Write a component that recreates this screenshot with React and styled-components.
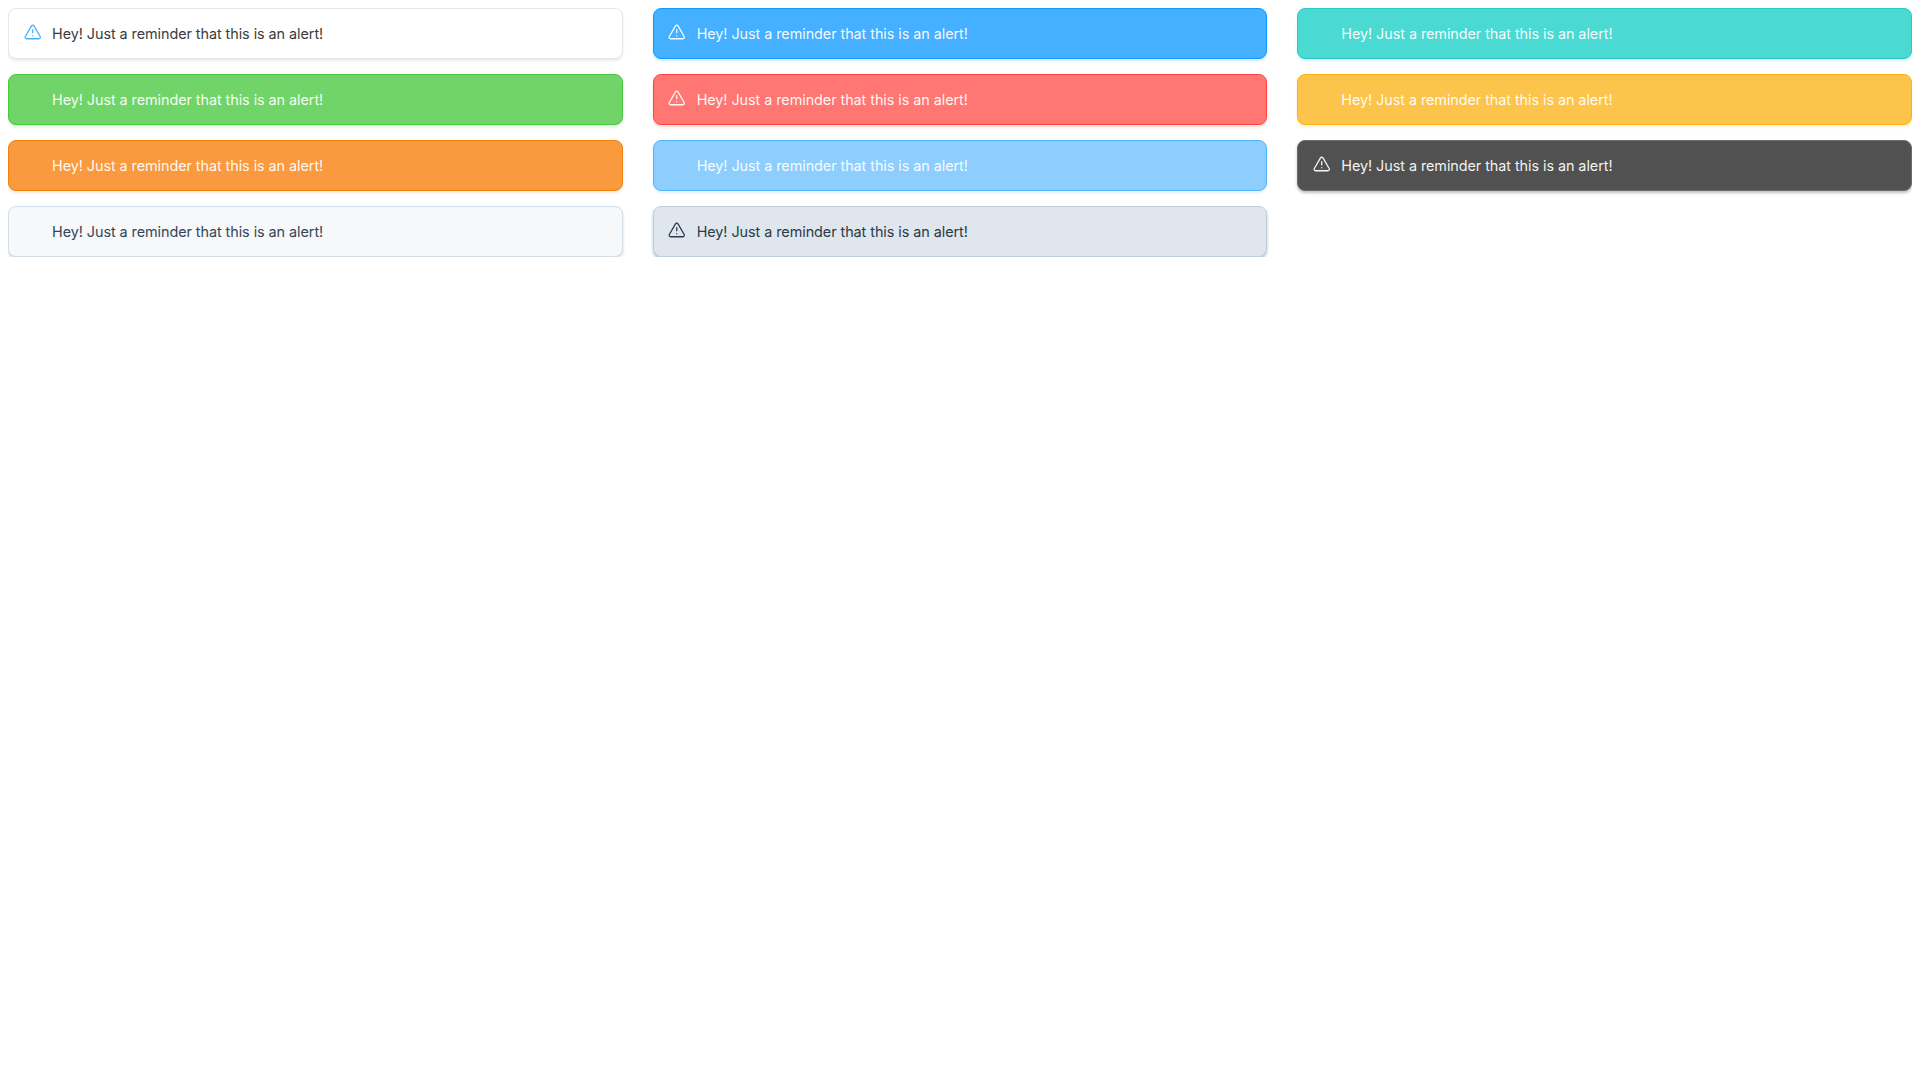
import React from "react";
import styled, { createGlobalStyle } from "styled-components";

const GlobalStyle = createGlobalStyle`
  *, *::before, *::after { box-sizing: border-box; }
  body { margin: 8px; background: #fff; font-family: Inter, "Liberation Sans", sans-serif; }
`;

const Grid = styled.div`
  display: grid;
  grid-template-columns: repeat(3, 1fr);
  column-gap: 30px;
  row-gap: 15px;
`;

const Alert = styled.div`
  display: flex;
  align-items: center;
  height: 51px;
  padding: 0 15px;
  border: 1px solid ${(p) => p.$border};
  border-radius: 8px;
  background: ${(p) => p.$bg};
  color: ${(p) => p.$color};
  box-shadow: 0 2px 3px ${(p) => p.$shadow};
`;

const IconSlot = styled.span`
  display: flex;
  width: 18px;
  height: 18px;
  margin: 0 10.5px 3px -0.5px;
  flex: none;
  color: ${(p) => p.$color};
`;

const Message = styled.span`
  font-size: 14.4px;
  font-weight: 400;
  line-height: 21px;
  letter-spacing: -0.06px;
`;

const Warning = () => (
  <svg width="17.5" height="18" viewBox="0 0 24 24" preserveAspectRatio="none" fill="none" stroke="currentColor" strokeWidth="1.75" strokeLinecap="round" strokeLinejoin="round">
    <path d="M10.29 3.86 1.82 18a2 2 0 0 0 1.71 3h16.94a2 2 0 0 0 1.71-3L13.71 3.86a2 2 0 0 0-3.42 0z" />
    <path d="M12 9v4M12 17h.01" />
  </svg>
);

const alerts = [
  { bg: "#ffffff", border: "#e6e6e6", shadow: "#00000014", color: "#3c3c3c", icon: "#45b0ff" },
  { bg: "#45b0ff", border: "#1299ff", shadow: "#1299ff33", color: "#fffffff0", icon: "#fffffff0" },
  { bg: "#4adad3", border: "#2bc9c1", shadow: "#2bc9c133", color: "#fffffff0" },
  { bg: "#70d468", border: "#47c73d", shadow: "#47c73d33", color: "#fffffff0" },
  { bg: "#ff7672", border: "#ff433e", shadow: "#ff433e33", color: "#fffffff0", icon: "#fffffff0" },
  { bg: "#fcc44a", border: "#fbb418", shadow: "#fbb41833", color: "#fffffff0" },
  { bg: "#f99a3e", border: "#f7800c", shadow: "#f7800c33", color: "#fffffff0" },
  { bg: "#8dceff", border: "#53b7ff", shadow: "#53b7ff33", color: "#fffffff0" },
  { bg: "#515151", border: "#6b6b6b", shadow: "#00000040", color: "#fffffff0", icon: "#fffffff0" },
  { bg: "#f6f8fa", border: "#d4dee7", shadow: "#a4b8ca80", color: "#33465a" },
  { bg: "#dfe6ed", border: "#c0ced7", shadow: "#7f9aae90", color: "#2a3a46", icon: "#2a3a46" },
];

export default function App() {
  return (
    <>
      <GlobalStyle />
      <Grid>
        {alerts.map((a) => (
          <Alert key={a.bg} $bg={a.bg} $border={a.border} $shadow={a.shadow} $color={a.color}>
            <IconSlot $color={a.icon}>{a.icon && <Warning />}</IconSlot>
            <Message>Hey! Just a reminder that this is an alert!</Message>
          </Alert>
        ))}
      </Grid>
    </>
  );
}
